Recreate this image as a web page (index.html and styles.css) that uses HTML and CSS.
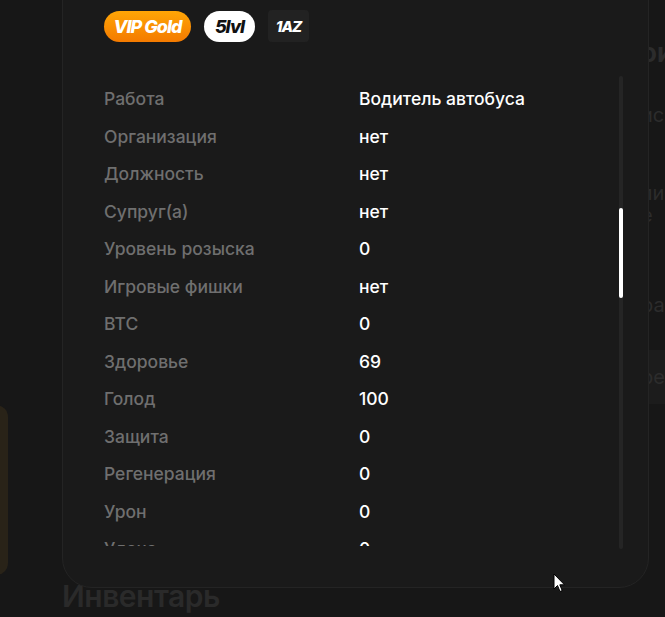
FILE: index.html
```html
<!DOCTYPE html>
<html lang="ru">
<head>
  <meta charset="UTF-8" />
  <meta name="viewport" content="width=device-width, initial-scale=1.0"/>
  <title>Профиль игрока</title>
  <link rel="stylesheet" href="styles.css">
</head>
<body>
  <!-- page behind the modal -->
  <div class="page">
    <div class="side">
      <div class="gold-card"></div>
    </div>
    <div class="main">
      <h2 class="section-title">Инвентарь</h2>
    </div>
    <div class="aside">
      <div class="aside-title">ои</div>
      <div class="aside-line first">ис</div>
      <div class="aside-line second">ли</div>
      <div class="aside-line small">е</div>
      <div class="aside-line third">ра</div>
      <div class="aside-box">ре</div>
    </div>
  </div>

  <!-- player modal -->
  <div class="modal">
    <div class="badges">
      <span class="badge vip">VIP Gold</span>
      <span class="badge level">5lvl</span>
      <span class="badge tag">1AZ</span>
    </div>

    <div class="stats-wrap">
      <div class="stats">
        <div class="row"><span class="label">Работа</span><span class="value">Водитель автобуса</span></div>
        <div class="row"><span class="label">Организация</span><span class="value">нет</span></div>
        <div class="row"><span class="label">Должность</span><span class="value">нет</span></div>
        <div class="row"><span class="label">Супруг(а)</span><span class="value">нет</span></div>
        <div class="row"><span class="label">Уровень розыска</span><span class="value">0</span></div>
        <div class="row"><span class="label">Игровые фишки</span><span class="value">нет</span></div>
        <div class="row"><span class="label">BTC</span><span class="value">0</span></div>
        <div class="row"><span class="label">Здоровье</span><span class="value">69</span></div>
        <div class="row"><span class="label">Голод</span><span class="value">100</span></div>
        <div class="row"><span class="label">Защита</span><span class="value">0</span></div>
        <div class="row"><span class="label">Регенерация</span><span class="value">0</span></div>
        <div class="row"><span class="label">Урон</span><span class="value">0</span></div>
        <div class="row"><span class="label">Удача</span><span class="value">0</span></div>
      </div>
      <div class="scrollbar">
        <div class="thumb"></div>
      </div>
    </div>
  </div>

  <svg class="cursor" width="13" height="20" viewBox="0 0 13 20">
    <path d="M1 1 L1 16 L4.5 12.5 L7 18.5 L9.2 17.6 L6.8 11.8 L11.5 11.8 Z" fill="#ffffff" stroke="#000000" stroke-width="1"/>
  </svg>
</body>
</html>
```

FILE: styles.css
```css
body {
  margin: 0;
  width: 665px;
  height: 617px;
  overflow: hidden;
  position: relative;
  background: #171717;
  font-family: 'Inter', 'Noto Sans', sans-serif;
  color: #ffffff;
}

/* background page */
.page {
  display: flex;
  height: 100%;
}

.side {
  width: 8px;
  padding-top: 405px;
}

.gold-card {
  width: 30px;
  height: 170px;
  margin-left: -22px;
  border-radius: 0 12px 12px 0;
  background: #292318;
}

.main {
  flex: 1;
  padding-left: 54px;
  padding-top: 578px;
}

.section-title {
  margin: 0;
  font-size: 30px;
  font-weight: 600;
  letter-spacing: -0.5px;
  color: #2a2a2a;
}

.aside {
  width: 24px;
  padding-left: 1px;
  color: #2c2c2c;
  font-size: 20px;
}

.aside-title {
  margin-top: 37px;
  font-size: 26px;
  font-weight: 700;
}

.aside-line {
  line-height: 22px;
}

.aside-line.first { margin-top: 36px; }
.aside-line.second { margin-top: 56px; }
.aside-line.small { margin-top: 0; }
.aside-line.third { margin-top: 68px; }

.aside-box {
  margin-top: 34px;
  height: 54px;
  line-height: 54px;
  background: #1c1c1c;
}

/* modal */
.modal {
  position: absolute;
  left: 62px;
  top: -40px;
  width: 544px;
  height: 626px;
  padding: 0 0 0 41px;
  background: #1a1a1a;
  border: 1px solid #242424;
  border-radius: 30px;
}

.badges {
  display: flex;
  align-items: center;
  gap: 13px;
  margin-top: 49px;
  height: 32px;
}

.badge {
  display: inline-flex;
  align-items: center;
  justify-content: center;
  height: 31px;
  font-style: italic;
  font-weight: 800;
  font-size: 17px;
  letter-spacing: -1px;
}

.vip {
  width: 87px;
  border-radius: 16px;
  background: linear-gradient(180deg, #ffa606, #f47a00);
  color: #ffffff;
  font-size: 18px;
}

.level {
  width: 51px;
  border-radius: 16px;
  background: #ffffff;
  color: #111111;
  font-size: 18px;
}

.tag {
  width: 41px;
  height: 32px;
  border-radius: 4px;
  background: #222222;
  color: #ffffff;
  font-size: 15px;
}

.stats-wrap {
  display: flex;
  margin-top: 38px;
}

.stats {
  flex: 1;
  height: 466px;
  overflow: hidden;
}

.row {
  display: flex;
  align-items: center;
  height: 37.5px;
  font-size: 17.5px;
  font-weight: 500;
}

.label {
  width: 255px;
  color: #6f6f6f;
}

.value {
  color: #ffffff;
}

.scrollbar {
  position: relative;
  width: 4px;
  height: 473px;
  margin: -4px 25px 0 0;
  border-radius: 2px;
  background: #252525;
}

.thumb {
  position: absolute;
  left: 0;
  top: 132px;
  width: 4px;
  height: 90px;
  border-radius: 2px;
  background: #ffffff;
}

.cursor {
  position: absolute;
  left: 553px;
  top: 573px;
}
```
